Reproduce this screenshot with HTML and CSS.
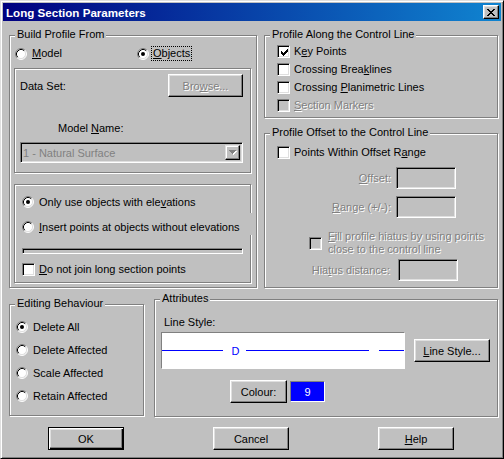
FILE: index.html
```html
<!DOCTYPE html>
<html>
<head>
<meta charset="utf-8">
<title>Long Section Parameters</title>
<link rel="stylesheet" href="styles.css">
</head>
<body>
<svg class="defs" width="0" height="0" aria-hidden="true">
  <defs>
    <symbol id="radio" viewBox="0 0 12 12">
      <circle cx="6" cy="6" r="5" fill="#fff"/>
      <path d="M2.11 9.89A5.5 5.5 0 0 1 9.89 2.11" stroke="#808080" fill="none"/>
      <path d="M9.89 2.11A5.5 5.5 0 0 1 2.11 9.89" stroke="#fff" fill="none"/>
      <path d="M2.82 9.18A4.5 4.5 0 0 1 9.18 2.82" stroke="#000" fill="none"/>
      <path d="M9.18 2.82A4.5 4.5 0 0 1 2.82 9.18" stroke="#dfdfdf" fill="none"/>
    </symbol>
    <symbol id="radio-on" viewBox="0 0 12 12">
      <use href="#radio"/>
      <circle cx="6" cy="6" r="2" fill="#000"/>
    </symbol>
  </defs>
</svg>

<div class="window">
  <div class="titlebar">
    <span class="title">Long Section Parameters</span>
    <span class="close">
      <svg width="8" height="7" viewBox="0 0 8 7"><path fill="#000" d="M0 0h2v1h-2z M6 0h2v1h-2z M1 1h2v1h-2z M5 1h2v1h-2z M2 2h4v1h-4z M3 3h2v1h-2z M2 4h4v1h-4z M1 5h2v1h-2z M5 5h2v1h-2z M0 6h2v1h-2z M6 6h2v1h-2z"/></svg>
    </span>
  </div>

  <div class="client">
    <div class="top-row">
      <div class="group g-build">
        <span class="caption">Build Profile From</span>
        <div class="src-row">
          <label class="opt opt-model"><svg class="rb" width="12" height="12"><use href="#radio"/></svg><span><u>M</u>odel</span></label>
          <label class="opt"><svg class="rb" width="12" height="12"><use href="#radio-on"/></svg><span class="focus"><u>O</u>bjects</span></label>
        </div>

        <div class="inset box-data">
          <div class="data-row">
            <span>Data Set:</span>
            <span class="btn btn-browse dis">Bro<u>w</u>se...</span>
          </div>
          <div class="model-label">Model <u>N</u>ame:</div>
          <div class="combo">
            <span class="combo-text">1 - Natural Surface</span>
            <span class="combo-btn">
              <svg width="8" height="5" viewBox="0 0 8 5"><path fill="#fff" d="M1 1h7v1h-1v1h-1v1h-1v1h-1v-1h-1v-1h-1v-1h-1z"/><path fill="#808080" d="M0 0h7v1h-1v1h-1v1h-1v1h-1v-1h-1v-1h-1v-1h-1z"/></svg>
            </span>
          </div>
        </div>

        <div class="inset box-elev">
          <label class="opt"><svg class="rb" width="12" height="12"><use href="#radio-on"/></svg><span>Only use objects with ele<u>v</u>ations</span></label>
          <label class="opt opt-insert"><svg class="rb" width="12" height="12"><use href="#radio"/></svg><span><u>I</u>nsert points at objects without elevations</span></label>
          <div class="bar"></div>
          <label class="chk"><span class="cb"></span><span><u>D</u>o not join long section points</span></label>
        </div>
      </div>

      <div class="right-col">
        <div class="group g-along">
          <span class="caption">Profile Along the Control Line</span>
          <label class="chk"><span class="cb"><svg width="7" height="7" viewBox="0 0 7 7"><path fill="#000" d="M0 2H1V3H2V4H3V3H4V2H5V1H6V0H7V3H6V4H5V5H4V6H3V7H2V6H1V5H0Z"/></svg></span><span>K<u>e</u>y Points</span></label>
          <label class="chk"><span class="cb"></span><span>Crossing Brea<u>k</u>lines</span></label>
          <label class="chk"><span class="cb"></span><span>Crossing <u>P</u>lanimetric Lines</span></label>
          <label class="chk"><span class="cb cb-dis"></span><span class="dis"><u>S</u>ection Markers</span></label>
        </div>

        <div class="group g-offset">
          <span class="caption">Profile Offset to the Control Line</span>
          <label class="chk"><span class="cb"></span><span>Points Within Offset R<u>a</u>nge</span></label>
          <div class="field-row fr-offset"><span class="dis"><u>O</u>ffset:</span><span class="edit"></span></div>
          <div class="field-row fr-range"><span class="dis"><u>R</u>ange (+/-):</span><span class="edit"></span></div>
          <label class="chk chk-fill"><span class="cb cb-dis"></span><span class="dis fill-text"><u>F</u>ill profile hiatus by using points<br>close to the control line</span></label>
          <div class="field-row fr-hiatus"><span class="dis">Hia<u>t</u>us distance:</span><span class="edit"></span></div>
        </div>
      </div>
    </div>

    <div class="mid-row">
      <div class="group g-edit">
        <span class="caption">Editing Behaviour</span>
        <label class="opt"><svg class="rb" width="12" height="12"><use href="#radio-on"/></svg><span>Delete All</span></label>
        <label class="opt"><svg class="rb" width="12" height="12"><use href="#radio"/></svg><span>Delete Affected</span></label>
        <label class="opt"><svg class="rb" width="12" height="12"><use href="#radio"/></svg><span>Scale Affected</span></label>
        <label class="opt"><svg class="rb" width="12" height="12"><use href="#radio"/></svg><span>Retain Affected</span></label>
      </div>

      <div class="group g-attr">
        <span class="caption">Attributes</span>
        <div class="ls-label">Line Style:</div>
        <div class="ls-row">
          <div class="ls-preview">
            <svg width="242" height="35" viewBox="0 0 242 35">
              <path stroke="#0000ff" d="M0 17.5H61 M84 17.5H207 M217 17.5H242"/>
              <text x="73.5" y="21.5" text-anchor="middle" fill="#0000ff" font-family="Liberation Sans, Arial, sans-serif" font-size="11">D</text>
            </svg>
          </div>
          <span class="btn btn-ls"><u>L</u>ine Style...</span>
        </div>
        <div class="colour-row">
          <span class="btn btn-colour">Colour:</span>
          <span class="swatch">9</span>
        </div>
      </div>
    </div>

    <div class="btn-row">
      <span class="btn btn-main btn-default">OK</span>
      <span class="btn btn-main">Cancel</span>
      <span class="btn btn-main"><u>H</u>elp</span>
    </div>
  </div>
</div>
</body>
</html>
```

FILE: styles.css
```css
* { box-sizing: border-box; }
html, body { margin: 0; padding: 0; }
body {
  background: #c0c0c0;
  font-family: "Liberation Sans", Arial, sans-serif;
  font-size: 11px;
  color: #000;
}
.defs { position: absolute; width: 0; height: 0; }
u { text-decoration: underline; text-underline-offset: 1px; }

.window {
  width: 504px;
  height: 459px;
  background: #c0c0c0;
  border: 1px solid;
  border-color: #dfdfdf #000 #000 #dfdfdf;
  box-shadow: inset 1px 1px #fff, inset -1px -1px #808080;
  padding: 2px;
  display: flex;
  flex-direction: column;
}

.titlebar {
  height: 18px;
  flex: none;
  background: linear-gradient(to right, #000080, #1084d0);
  display: flex;
  align-items: center;
  justify-content: space-between;
  padding: 0 2px 0 3px;
  color: #fff;
  font-weight: bold;
  font-size: 11.6px;
}
.close {
  width: 16px;
  height: 14px;
  background: #c0c0c0;
  border: 1px solid;
  border-color: #fff #000 #000 #fff;
  box-shadow: inset -1px -1px #808080, inset 1px 1px #dfdfdf;
  display: flex;
  align-items: center;
  justify-content: center;
}
.close svg { display: block; margin-left: -1px; }

.client {
  flex: 1;
  padding: 0 0 0 6px;
  display: flex;
  flex-direction: column;
}

.group {
  position: relative;
  border: 1px solid #808080;
  box-shadow: inset 1px 1px #fff, 1px 1px #fff;
  display: flex;
  flex-direction: column;
}
.caption {
  position: absolute;
  left: 5px;
  top: -8px;
  padding: 0 2px;
  background: #c0c0c0;
  line-height: 13px;
  white-space: nowrap;
}
.inset {
  border: 1px solid #808080;
  box-shadow: inset 1px 1px #fff, 1px 1px #fff;
  display: flex;
  flex-direction: column;
}

.dis { color: #808080; text-shadow: 1px 1px 0 #fff; }

/* radio + checkbox */
.opt, .chk {
  display: flex;
  align-items: center;
  white-space: nowrap;
  line-height: 13px;
}
.opt { gap: 5px; }
.chk { gap: 4px; }
.rb { display: block; flex: none; }
.cb {
  flex: none;
  width: 13px;
  height: 13px;
  background: #fff;
  border: 1px solid;
  border-color: #808080 #fff #fff #808080;
  box-shadow: inset 1px 1px #000, inset -1px -1px #dfdfdf;
  display: flex;
  align-items: center;
  justify-content: center;
}
.cb svg { display: block; margin: 1px 0 0 1px; }
.cb-dis { background: #c0c0c0; }

/* buttons */
.btn {
  display: flex;
  align-items: center;
  justify-content: center;
  height: 23px;
  background: #c0c0c0;
  border: 1px solid;
  border-color: #fff #000 #000 #fff;
  box-shadow: inset -1px -1px #808080, inset 1px 1px #dfdfdf;
  white-space: nowrap;
}

/* ---- top row ---- */
.top-row { display: flex; margin-top: 14px; }

.g-build { width: 248px; height: 253px; padding: 10px 0 0 4px; }
.src-row { display: flex; align-items: center; height: 15px; margin-left: 1px; }
.opt-model { width: 122px; }
.focus { border: 1px dotted #000; padding: 0 1px 0 1px; margin-left: -3px; line-height: 13px; }

.box-data { width: 237px; height: 105px; margin-top: 7px; padding: 5px 7px 0 5px; }
.data-row { display: flex; align-items: center; justify-content: space-between; }
.btn-browse { width: 75px; }
.model-label { margin: 25px 0 0 38px; line-height: 12px; }
.combo {
  margin-top: 8px;
  width: 223px;
  height: 21px;
  display: flex;
  align-items: center;
  justify-content: space-between;
  border: 1px solid;
  border-color: #808080 #fff #fff #808080;
  box-shadow: inset 1px 1px #000, inset -1px -1px #dfdfdf;
  padding: 2px;
}
.combo-text { color: #808080; padding-left: 0; }
.combo-btn {
  width: 15px;
  height: 15px;
  background: #c0c0c0;
  border: 1px solid;
  border-color: #dfdfdf #000 #000 #dfdfdf;
  box-shadow: inset -1px -1px #808080, inset 1px 1px #fff;
  display: flex;
  align-items: center;
  justify-content: center;
}
.combo-btn svg { display: block; }

.box-elev { width: 237px; height: 99px; margin-top: 11px; padding: 11px 0 0 7px; }
.box-elev .opt { height: 12px; }
.box-elev .opt-insert {
  height: 22px;
  width: 230px;
  margin-top: 5px;
  padding-top: 6px;
  background: #c0c0c0;
}
.bar {
  margin-top: 13px;
  width: 221px;
  height: 6px;
  border: 1px solid;
  border-color: #808080 #fff #fff #808080;
  box-shadow: inset 1px 1px #000;
}
.box-elev .chk { margin-top: 9px; height: 13px; }

.right-col { margin-left: 7px; width: 234px; display: flex; flex-direction: column; }
.g-along { height: 83px; padding: 9px 0 0 12px; gap: 5px; }
.g-along .chk { height: 13px; }

.g-offset { margin-top: 15px; height: 155px; padding: 12px 0 0 12px; }
.g-offset > .chk { height: 13px; }
.field-row { display: flex; align-items: center; justify-content: flex-end; height: 22px; }
.fr-offset { margin: 8px 41px 0 0; gap: 5px; }
.fr-range { margin: 7px 41px 0 0; gap: 5px; }
.fr-hiatus { margin: 3px 39px 0 0; gap: 8px; }
.edit {
  width: 60px;
  height: 22px;
  border: 1px solid;
  border-color: #808080 #fff #fff #808080;
  box-shadow: inset 1px 1px #000, inset -1px -1px #dfdfdf;
  background: #c0c0c0;
}
.chk-fill { margin: 12px 0 0 32px; gap: 6px; height: 26px !important; }
.fill-text { line-height: 13px; white-space: nowrap; }

/* ---- middle row ---- */
.mid-row { display: flex; align-items: flex-start; margin-top: 11px; }
.g-edit { margin-top: 5px; width: 135px; height: 112px; padding: 16px 0 0 6px; gap: 11px; }
.g-edit .opt { height: 12px; }

.g-attr { margin-left: 10px; width: 344px; height: 118px; padding: 16px 0 0 6px; }
.ls-label { margin-left: 3px; line-height: 12px; }
.ls-row { display: flex; align-items: center; margin-top: 4px; }
.ls-preview {
  width: 244px;
  height: 37px;
  background: #fff;
  border: 1px solid;
  border-color: #808080 #fff #fff #808080;
}
.ls-preview svg { display: block; }
.btn-ls { margin-left: 9px; width: 76px; }
.colour-row { display: flex; align-items: center; margin: 11px 0 0 69px; }
.btn-colour { width: 57px; }
.swatch {
  margin-left: 3px;
  width: 35px;
  height: 21px;
  background: #0000ff;
  color: #fff;
  border: 1px solid;
  border-color: #808080 #fff #fff #808080;
  display: flex;
  align-items: center;
  justify-content: center;
}

/* ---- buttons ---- */
.btn-row { display: flex; gap: 89px; margin-top: 10px; padding-left: 39px; }
.btn-main { width: 76px; }
.btn-default {
  border-color: #000;
  box-shadow: inset 1px 1px #fff, inset -1px -1px #000, inset -2px -2px #808080, inset 2px 2px #dfdfdf;
}
```
